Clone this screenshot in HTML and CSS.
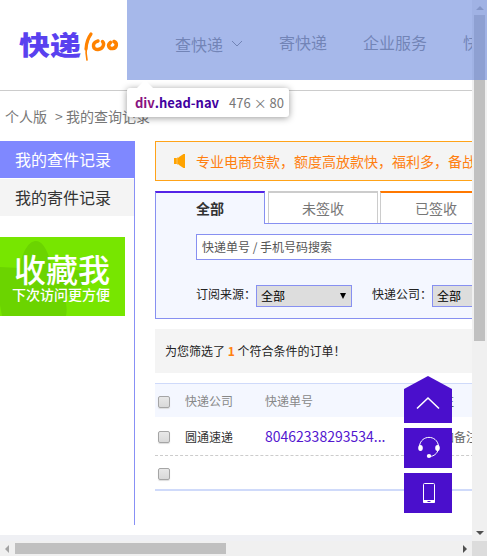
FILE: index.html
```html
<!DOCTYPE html>
<html lang="zh-CN">
<head>
<meta charset="utf-8">
<title>我的查询记录</title>
<link rel="stylesheet" href="styles.css">
</head>
<body>
<div class="window">
  <div class="page">
    <header class="head">
      <div class="logo">
        <span class="logo-name">快递</span>
        <svg class="logo-mark" width="36" height="32" viewBox="0 0 36 32" fill="none" stroke="#ff8200" stroke-linecap="round">
          <path d="M8 3Q1 14 4 29" stroke-width="1.600"/>
          <path d="M8 3Q3.500 9 3 18" stroke-width="3.200"/>
          <path d="M15 10C8 12 10 19 15 18.500C20 18 22 13 19.500 10.500" stroke-width="3.400"/>
          <path d="M27.500 11.500C24 14 26 18 29.500 17.500C34 17 34.500 12 31 10.500" stroke-width="3.600"/>
        </svg>
      </div>
      <nav class="head-nav">
        <span class="nav-item has-menu">查快递<svg width="12" height="7" viewBox="0 0 12 7" fill="none" stroke="#777"><path d="M1 1L6 6L11 1"/></svg></span>
        <span class="nav-item">寄快递</span>
        <span class="nav-item">企业服务</span>
        <span class="nav-item">快递</span>
      </nav>
    </header>
    <div class="crumbs"><span>个人版</span><span class="crumb-here">&gt; 我的查询记录</span></div>
    <div class="body">
      <aside class="side">
        <div class="side-item active">我的查件记录</div>
        <div class="side-item">我的寄件记录</div>
        <div class="fav">
          <svg class="fav-star" width="125" height="79" viewBox="0 0 125 79"><path d="M35 4C44 3 49 18 52 30L92 35Q97 39 89 45L64 61Q68 69 66 79H2L0 68V30L19 31Q25 5 35 4Z" fill="#6bd400"/></svg>
          <div class="fav-big">收藏我</div>
          <div class="fav-small">下次访问更方便</div>
        </div>
      </aside>
      <main class="main">
        <div class="notice">
          <svg width="12" height="14" viewBox="0 0 12 14" fill="#ffa300"><path d="M0 4H2.800V10H0ZM3.200 3.500H5V10.500H3.200ZM5 3L9.500 0H11V14H9.500L5 11Z"/></svg>
          <span>专业电商贷款，额度高放款快，福利多，备战双十一</span>
        </div>
        <div class="tabs">
          <div class="tab current">全部</div>
          <div class="tab">未签收</div>
          <div class="tab signed">已签收</div>
        </div>
        <div class="panel">
          <div class="search">快递单号 / 手机号码搜索</div>
          <div class="filters">
            <span class="label">订阅来源：</span><span class="select">全部<i class="arrow"></i></span>
            <span class="label second">快递公司：</span><span class="select">全部<i class="arrow"></i></span>
          </div>
        </div>
        <div class="summary">为您筛选了 <b>1</b> 个符合条件的订单！</div>
        <div class="table">
          <div class="row thead"><i class="check"></i><span class="company">快递公司</span><span class="number">快递单号</span><span class="note">备注</span></div>
          <div class="row item"><i class="check"></i><span class="company">圆通速递</span><span class="number">80462338293534...</span><span class="note">添加备注</span></div>
          <div class="row last"><i class="check"></i></div>
        </div>
      </main>
    </div>
    <div class="tools">
      <div class="tool top"><svg width="48" height="47" viewBox="0 0 48 47" fill="none"><path d="M0 47V13L24 0L48 13V47Z" fill="#4a0fcc"/><path d="M13 32.500L24 22L35 32.500" stroke="#fff" stroke-width="1.600"/></svg></div>
      <div class="tool"><svg width="48" height="40" viewBox="0 0 48 40" fill="none" stroke="#fff"><path d="M15.500 18C17 6.500 33 6.500 34.500 18M34.500 21C33 26 30 28 26 28.500"/><ellipse cx="16.500" cy="20" rx="2.300" ry="3" fill="#fff" stroke="none"/><ellipse cx="33.500" cy="20" rx="2.300" ry="3" fill="#fff" stroke="none"/><ellipse cx="25" cy="28" rx="2.200" ry="1.900" fill="#fff" stroke="none"/></svg></div>
      <div class="tool"><svg width="48" height="40" viewBox="0 0 48 40"><rect x="19.500" y="10.500" width="11" height="19" rx="1" fill="none" stroke="#fff"/><path d="M19 27H31V29Q31 30 30 30H20Q19 30 19 29Z" fill="#fff"/><path d="M23.500 28.500H26.500" stroke="#4a0fcc"/></svg></div>
    </div>
  </div>
  <div class="vbar"><i class="up"></i><div class="vthumb"></div><i class="down"></i></div>
  <div class="hbar"><i class="left"></i><div class="hthumb"></div><i class="right"></i></div>
  <div class="corner"></div>
  <div class="highlight"></div>
  <div class="tip"><span class="tip-tag">div</span><span class="tip-class">.head-nav</span><span class="tip-size">476 × 80</span></div>
</div>
</body>
</html>
```
FILE: styles.css
```css
* { box-sizing: border-box; }
body {
  margin: 0;
  background: #fff;
  color: #222;
  font: 12px/18px "Noto Sans CJK SC", sans-serif;
  white-space: nowrap;
}
svg { display: block; flex: none; }
.window {
  position: relative;
  display: grid;
  grid-template-columns: 472px 15px;
  grid-template-rows: 541px 15px;
  width: 487px;
  height: 556px;
  overflow: hidden;
}
.page {
  position: relative;
  min-width: 0;
  overflow: hidden;
  border-bottom: 6px solid #eff0f4;
}

.head { display: flex; height: 91px; border-bottom: 1px solid #ccc; }
.logo { display: flex; flex: none; width: 127px; padding: 30px 0 0 19px; }
.logo-name {
  width: 64px;
  height: 30px;
  font-weight: 900;
  font-size: 31px;
  line-height: 28px;
  color: #5941ef;
  transform: scaleY(.86);
}
.logo-mark { margin-top: 1px; }
.head-nav {
  display: flex;
  flex: none;
  width: 476px;
  height: 80px;
  padding: 7px 0 0 48px;
  font-size: 16px;
  line-height: 70px;
  color: #777;
}
.nav-item { margin-right: 36px; }
.has-menu { display: flex; align-items: center; gap: 8px; }

.crumbs {
  height: 50px;
  padding-left: 5px;
  font-size: 14px;
  line-height: 50px;
  color: #777;
}
.crumb-here { margin-left: 8px; }

.body { display: flex; }
.side {
  flex: none;
  width: 135px;
  height: 384px;
  margin-right: 20px;
  border-right: 1px solid #8890f5;
}
.side-item {
  height: 37px;
  margin-bottom: 1px;
  padding-left: 15px;
  background: #f4f4f4;
  font-size: 16px;
  line-height: 36px;
  color: #333;
}
.side-item.active { width: 135px; background: #7f88ff; color: #fff; }
.fav {
  position: relative;
  width: 125px;
  height: 79px;
  margin-top: 21px;
  padding: 14px 0 0 12px;
  background: #77e600;
  color: #fff;
}
.fav-star { position: absolute; left: 0; top: 0; }
.fav-big { position: relative; padding-left: 2px; font-size: 32px; line-height: 34px; font-weight: 500; }
.fav-small { position: relative; font-size: 14px; line-height: 18px; font-weight: 500; }

.main { flex: none; width: 560px; }
.notice {
  display: flex;
  align-items: center;
  gap: 10px;
  height: 40px;
  padding-left: 18px;
  border: 1px solid #ffa319;
  background: #f4f4f4;
  font-size: 14px;
  color: #ff7f10;
}
.tabs { display: flex; gap: 3px; height: 32px; margin-top: 10px; }
.tab {
  width: 110px;
  border: 1px solid #ccc;
  border-width: 2px 1px 0;
  font-size: 14px;
  line-height: 30px;
  text-align: center;
  color: #777;
}
.tab.current {
  position: relative;
  height: 33px;
  border-color: #5423e7 #8790f1 #8790f1;
  background: #f4f7ff;
  color: #333;
  font-weight: bold;
}
.tab.signed { width: 112px; margin-left: -1px; border-top-color: #ff7800; }
.panel {
  height: 96px;
  padding: 10px 0 0 40px;
  border: 1px solid #8790f1;
  background: #f4f7ff;
}
.search {
  width: 400px;
  height: 26px;
  padding-left: 5px;
  border: 1px solid #8790f1;
  background: #fff;
  line-height: 23px;
  color: #555;
}
.filters { display: flex; margin-top: 25px; }
.label { width: 60px; line-height: 17px; }
.label.second { margin-left: 20px; }
.select {
  display: flex;
  align-items: center;
  justify-content: space-between;
  width: 96px;
  height: 22px;
  padding: 0 5px 0 4px;
  border: 1px solid #8790f1;
  background: #ddd;
  color: #000;
}
.arrow { border: solid transparent; border-width: 6px 3px 0; border-top-color: #000; }
.summary {
  height: 44px;
  margin-top: 10px;
  padding-left: 10px;
  background: #f4f4f4;
  line-height: 43px;
}
.summary b { color: #ff7f10; }
.table { margin-top: 10px; border-top: 1px solid #cfdafa; border-bottom: 2px solid #cfdafa; }
.row { display: flex; align-items: center; padding-left: 3px; }
.thead { height: 33px; padding-top: 3px; background: #f4f7ff; color: #888; line-height: 16px; }
.thead span { margin-top: -2px; }
.item { height: 39px; padding-top: 2px; border-bottom: 1px dashed #ccc; color: #333; }
.last { height: 33px; padding-top: 2px; }
.check {
  width: 12px;
  height: 12px;
  margin-right: 15px;
  border: 1px solid #a5a5a5;
  border-radius: 2px;
  background: linear-gradient(#e8e8e8, #d9d9d9);
  box-shadow: 0 1px 1px #ddd;
}
.company { width: 80px; }
.number { width: 165px; }
.item .number { margin-top: -3px; font-size: 14px; color: #5317cf; }
.note { color: #666; }

.tools {
  position: absolute;
  left: 404px;
  top: 376px;
  display: grid;
  grid-template-rows: 47px 40px 40px;
  gap: 5px;
}
.tool { width: 48px; background: #4a0fcc; }
.tool.top { background: none; }

.vbar {
  display: flex;
  flex-direction: column;
  align-items: center;
  padding: 6px 0;
  background: #f0f0f0;
}
.vthumb { width: 11px; height: 326px; margin: 5px 0 auto; background: #c0c0c0; }
.up, .down { border: solid transparent; }
.up { border-width: 0 4px 4px; border-bottom-color: #a3a3a3; }
.down { border-width: 4px 4px 0; border-top-color: #505050; }
.hbar { display: flex; align-items: center; padding: 0 5px; background: #f0f0f0; }
.hthumb { width: 211px; height: 11px; margin: 0 auto 0 6px; background: #c0c0c0; }
.left, .right { border: solid transparent; }
.left { border-width: 4px 4px 4px 0; border-right-color: #a3a3a3; }
.right { border-width: 4px 0 4px 4px; border-left-color: #505050; }
.corner { background: #dcdcdc; }

.highlight {
  position: absolute;
  left: 127px;
  top: 0;
  width: 360px;
  height: 80px;
  background: rgba(111, 141, 221, .62);
}
.tip {
  position: absolute;
  left: 127px;
  top: 88px;
  display: flex;
  width: 162px;
  height: 29px;
  padding-left: 8px;
  border-radius: 3px;
  background: #fff;
  box-shadow: 0 1px 7px rgba(0, 0, 0, .4);
  font-size: 13px;
  line-height: 29px;
}
.tip::before {
  content: "";
  position: absolute;
  left: 10px;
  top: -8px;
  border: solid transparent;
  border-width: 0 8px 8px;
  border-bottom-color: #fff;
}
.tip-tag, .tip-class { font-weight: bold; }
.tip-tag { color: #881280; }
.tip-class { color: #4100a0; }
.tip-size { margin-left: 10px; color: #777; }
```
